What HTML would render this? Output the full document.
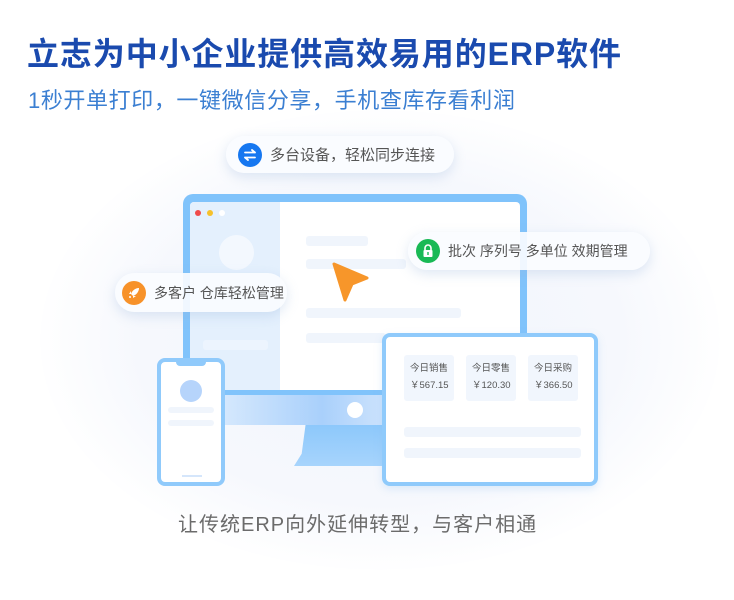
<!DOCTYPE html><html><head><meta charset="utf-8"><style>
*{margin:0;padding:0;box-sizing:border-box}
body{width:734px;height:600px;overflow:hidden;background:#fff;font-family:"Liberation Sans","Noto Sans CJK SC",sans-serif;position:relative}
.a{position:absolute}
.bg{left:40px;top:110px;width:680px;height:460px;border-radius:50%;background:radial-gradient(ellipse at center,#f1f5fc 0%,#f6f8fd 50%,rgba(255,255,255,0) 72%)}
h1{position:absolute;left:27px;top:29px;font-size:32px;font-weight:bold;color:#1a4aae;letter-spacing:0.9px;white-space:nowrap}
.sub{left:28px;top:83px;font-size:22px;color:#3b7fd2;white-space:nowrap;letter-spacing:0.6px}
.pill{background:rgba(250,252,255,.92);border-radius:20px;box-shadow:0 4px 12px rgba(150,180,220,.3);font-size:14px;color:#555;white-space:nowrap;display:flex;align-items:center}
.ic{width:24px;height:24px;border-radius:50%;margin:0 8px 0 0;display:flex;align-items:center;justify-content:center}
.bar{background:#f0f5fc;border-radius:3px}
.card{background:#f1f6fd;border-radius:3px;font-size:9.5px;color:#555;padding:5px 0 0 6px;line-height:17px}
</style></head><body>
<div class="a bg"></div>
<h1>立志为中小企业提供高效易用的ERP软件</h1>
<div class="a sub">1秒开单打印，一键微信分享，手机查库存看利润</div>

<div class="a" style="left:183px;top:194px;width:344px;height:205px;background:#80c3fb;border-radius:10px"></div>
<div class="a" style="left:190px;top:202px;width:330px;height:188px;background:#fff;border-radius:4px"></div>
<div class="a" style="left:190px;top:202px;width:90px;height:188px;background:#e4f0fd;border-radius:4px 0 0 4px"></div>
<div class="a" style="left:195px;top:210px;width:6px;height:6px;border-radius:50%;background:#f04b4b"></div>
<div class="a" style="left:207px;top:210px;width:6px;height:6px;border-radius:50%;background:#f6c12b"></div>
<div class="a" style="left:219px;top:210px;width:6px;height:6px;border-radius:50%;background:#fff"></div>
<div class="a" style="left:219px;top:235px;width:35px;height:35px;border-radius:50%;background:#f3f8fe"></div>
<div class="a" style="left:203px;top:340px;width:65px;height:10px;background:#ecf4fe;border-radius:3px"></div>
<div class="a bar" style="left:306px;top:236px;width:62px;height:10px"></div>
<div class="a bar" style="left:306px;top:259px;width:100px;height:10px"></div>
<div class="a bar" style="left:306px;top:308px;width:155px;height:10px"></div>
<div class="a bar" style="left:306px;top:333px;width:80px;height:10px"></div>
<div class="a" style="left:223px;top:395px;width:165px;height:30px;background:linear-gradient(90deg,#d5e8fd,#a9d0fb 60%,#cfe4fd)"></div>
<div class="a" style="left:347px;top:402px;width:16px;height:16px;border-radius:50%;background:#fff"></div>
<div class="a" style="left:294px;top:425px;width:96px;height:41px;background:linear-gradient(180deg,#8dc8fb,#a7d4fc);clip-path:polygon(12% 0,100% 0,100% 100%,0 100%,8% 70%)"></div>
<svg class="a" style="left:330px;top:262px" width="40" height="40" viewBox="0 0 40 40"><path d="M4 2 L37 16 L22 22 L15 38 Z" fill="#f7962a" stroke="#f7962a" stroke-width="3" stroke-linejoin="round"/></svg>

<div class="a" style="left:157px;top:358px;width:68px;height:128px;border:4px solid #90cafb;border-radius:8px;background:#fff"></div>
<div class="a" style="left:176px;top:361px;width:30px;height:5px;background:#90cafb;border-radius:0 0 4px 4px"></div>
<div class="a" style="left:180px;top:380px;width:22px;height:22px;border-radius:50%;background:#b6d4fb"></div>
<div class="a bar" style="left:168px;top:407px;width:46px;height:6px"></div>
<div class="a bar" style="left:168px;top:420px;width:46px;height:6px"></div>
<div class="a" style="left:182px;top:475px;width:20px;height:2px;background:#d5e6fb"></div>

<div class="a" style="left:382px;top:333px;width:216px;height:153px;border:4px solid #8fcafb;border-radius:8px;background:#fff;box-shadow:0 3px 8px rgba(140,190,240,.25)"></div>
<div class="a card" style="left:404px;top:355px;width:50px;height:46px">今日销售<br>￥567.15</div>
<div class="a card" style="left:466px;top:355px;width:50px;height:46px">今日零售<br>￥120.30</div>
<div class="a card" style="left:528px;top:355px;width:50px;height:46px">今日采购<br>￥366.50</div>
<div class="a bar" style="left:404px;top:427px;width:177px;height:10px"></div>
<div class="a bar" style="left:404px;top:448px;width:177px;height:10px"></div>

<div class="a pill" style="left:226px;top:136px;width:228px;height:37px;padding-left:12px;font-size:15px"><div class="ic" style="background:#1677f0"><svg width="14" height="14" viewBox="0 0 14 14" fill="none" stroke="#fff" stroke-width="1.8" stroke-linecap="round" stroke-linejoin="round"><path d="M2 4.5h10M9 2l3 2.5M12 9.5H2M5 12L2 9.5"/></svg></div>多台设备，轻松同步连接</div>
<div class="a pill" style="left:408px;top:232px;width:242px;height:38px;padding-left:8px"><div class="ic" style="background:#19b955"><svg width="12" height="14" viewBox="0 0 12 14"><path d="M3 6V4a3 3 0 016 0v2" fill="none" stroke="#fff" stroke-width="1.6"/><rect x="1.5" y="6" width="9" height="7" rx="1" fill="#fff"/><rect x="5.3" y="8" width="1.4" height="3" fill="#19b955"/></svg></div>批次 序列号 多单位 效期管理</div>
<div class="a pill" style="left:115px;top:273px;width:172px;height:39px;padding-left:7px"><div class="ic" style="background:#f7922a"><svg width="14" height="14" viewBox="0 0 14 14"><path d="M12 2C8 2 5 5 4 8l2 2c3-1 6-4 6-8z" fill="#fff"/><path d="M4 8L2 8 4 5M6 10v2l3-2" fill="#fff"/><circle cx="3" cy="11" r="1" fill="#fff"/></svg></div>多客户 仓库轻松管理</div>

<div class="a" style="left:178px;top:508px;font-size:20px;color:#6b6b6b;white-space:nowrap;letter-spacing:1px">让传统ERP向外延伸转型，与客户相通</div>
</body></html>
